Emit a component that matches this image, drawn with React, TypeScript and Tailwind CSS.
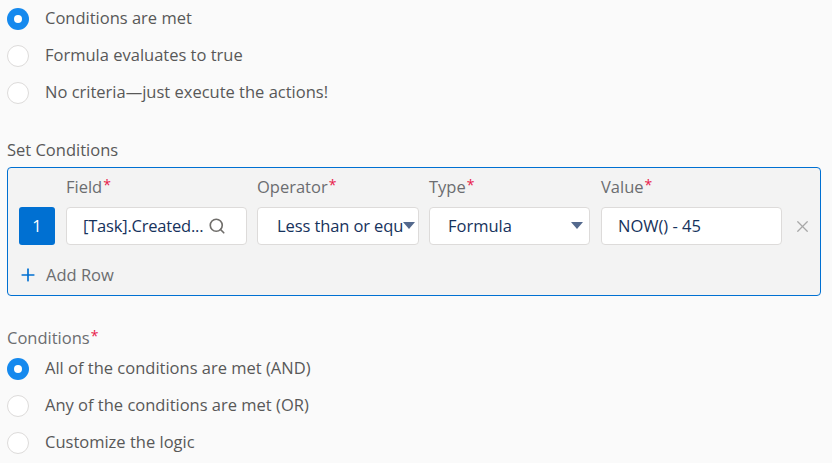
import { Search, X, Plus } from 'lucide-react'

const FONT = { fontFamily: '"Open Sans", "Noto Sans", sans-serif' }

function Radio({ label, checked }: { label: string; checked?: boolean }) {
  return (
    <div className="flex h-[37px] items-center">
      {checked ? (
        <span className="flex h-[22px] w-[22px] items-center justify-center rounded-full bg-[#1589ee]">
          <span className="h-[8px] w-[8px] rounded-full bg-white" />
        </span>
      ) : (
        <span className="h-[22px] w-[22px] rounded-full border border-[#dddbda] bg-white" />
      )}
      <span className="ml-[16px] text-[16.5px] text-[#585858]">{label}</span>
    </div>
  )
}

function Label({ text }: { text: string }) {
  return (
    <div className="flex h-[20px] items-center text-[16.5px] text-[#6b6d70]">
      {text}
      <span className="ml-[1px] -mt-[6px] text-[14px] text-[#e8194b]">*</span>
    </div>
  )
}

function Caret() {
  return (
    <svg width="12" height="8" viewBox="0 0 12 8" className="shrink-0">
      <path d="M0 0h12L6 7z" fill="#54698d" />
    </svg>
  )
}

export default function App() {
  return (
    <div className="min-h-screen bg-[#fafafa] pl-[7px] pr-[11px]" style={FONT}>
      <div>
        <Radio label="Conditions are met" checked />
        <Radio label="Formula evaluates to true" />
        <Radio label="No criteria—just execute the actions!" />
      </div>

      <div className="mt-[29px] flex h-[20px] items-center text-[16.5px] text-[#585858]">
        Set Conditions
      </div>

      <div className="mt-[7px] rounded-[4px] border border-[#0070d2] bg-[#f3f3f3] pb-[10px] pl-[11px] pt-[9px]">
        <div className="flex items-end">
          <div className="mr-[11px] flex h-[38px] w-[36px] items-center justify-center rounded-[3px] bg-[#0070d2] text-[16.5px] text-white">
            1
          </div>
          <div className="flex flex-col gap-[10px]">
            <Label text="Field" />
            <div className="flex h-[38px] w-[181px] items-center rounded-[4px] border border-[#dddbda] bg-white pl-[16px] pr-[20px] text-[16.5px] text-[#16325c]">
              <span className="min-w-0 flex-1 whitespace-nowrap tracking-[-0.2px]">[Task].Created...</span>
              <Search size={18} strokeWidth={2.2} className="ml-[3px] shrink-0 text-[#706e6b]" />
            </div>
          </div>
          <div className="ml-[10px] flex flex-col gap-[10px]">
            <Label text="Operator" />
            <div className="flex h-[38px] w-[162px] items-center rounded-[4px] border border-[#dddbda] bg-white pl-[19px] pr-[3px] text-[16.5px] text-[#16325c]">
              <span className="min-w-0 flex-1 whitespace-nowrap tracking-[-0.1px]">Less than or equ</span>
              <Caret />
            </div>
          </div>
          <div className="ml-[10px] flex flex-col gap-[10px]">
            <Label text="Type" />
            <div className="flex h-[38px] w-[161px] items-center justify-between rounded-[4px] border border-[#dddbda] bg-white pl-[18px] pr-[6px] text-[16.5px] text-[#16325c]">
              <span>Formula</span>
              <Caret />
            </div>
          </div>
          <div className="ml-[11px] flex flex-col gap-[10px]">
            <Label text="Value" />
            <div className="flex h-[38px] w-[181px] items-center rounded-[4px] border border-[#dddbda] bg-white pl-[16px] text-[16.5px] text-[#16325c]">
              NOW() - 45
            </div>
          </div>
          <div className="flex h-[38px] items-center pl-[11px]">
            <X size={19} strokeWidth={1.6} className="text-[#a8a8a8]" />
          </div>
        </div>
        <div className="mt-[20px] flex h-[20px] items-center">
          <Plus size={20} strokeWidth={2} className="-ml-[1px] text-[#0070d2]" />
          <span className="ml-[8px] text-[16.5px] text-[#6b6d70]">Add Row</span>
        </div>
      </div>

      <div className="mt-[32px]">
        <Label text="Conditions" />
      </div>
      <div className="mt-[2px]">
        <Radio label="All of the conditions are met (AND)" checked />
        <Radio label="Any of the conditions are met (OR)" />
        <Radio label="Customize the logic" />
      </div>
    </div>
  )
}
